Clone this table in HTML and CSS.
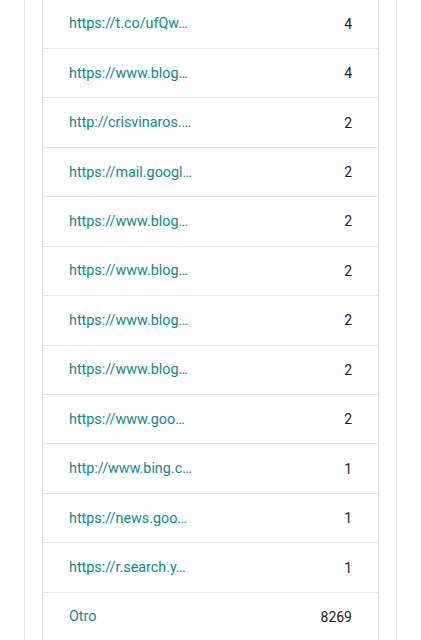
FILE: index.html
```html
<!DOCTYPE html>
<html lang="es">
<head>
  <meta charset="UTF-8">
  <title>Sitios de referencia</title>
  <link rel="stylesheet" href="styles.css">
</head>
<body>
  <div class="card">
    <table class="tabla-sitios">
      <tbody>
        <tr><td class="url"><a href="#">https://t.co/ufQw…</a></td><td class="num">4</td></tr>
        <tr><td class="url"><a href="#">https://www.blog…</a></td><td class="num">4</td></tr>
        <tr><td class="url"><a href="#">http://crisvinaros.…</a></td><td class="num">2</td></tr>
        <tr><td class="url"><a href="#">https://mail.googl…</a></td><td class="num">2</td></tr>
        <tr><td class="url"><a href="#">https://www.blog…</a></td><td class="num">2</td></tr>
        <tr><td class="url"><a href="#">https://www.blog…</a></td><td class="num">2</td></tr>
        <tr><td class="url"><a href="#">https://www.blog…</a></td><td class="num">2</td></tr>
        <tr><td class="url"><a href="#">https://www.blog…</a></td><td class="num">2</td></tr>
        <tr><td class="url"><a href="#">https://www.goo…</a></td><td class="num">2</td></tr>
        <tr><td class="url"><a href="#">http://www.bing.c…</a></td><td class="num">1</td></tr>
        <tr><td class="url"><a href="#">https://news.goo…</a></td><td class="num">1</td></tr>
        <tr><td class="url"><a href="#">https://r.search.y…</a></td><td class="num">1</td></tr>
        <tr><td class="url otro">Otro</td><td class="num">8269</td></tr>
      </tbody>
    </table>
  </div>
</body>
</html>
```

FILE: styles.css
```css
body {
  margin: 0;
  background: #fff;
  font-family: Roboto, "Noto Sans", Arial, sans-serif;
  font-size: 14px;
}

.card {
  margin: 0 24px;
  padding: 0 17px;
  border-left: 1px solid #e4e4e4;
  border-right: 1px solid #e4e4e4;
  min-height: 640px;
}

.tabla-sitios {
  width: 100%;
  margin-top: -1.5px;
  border-collapse: collapse;
  border-left: 1px solid #e4e4e4;
  border-right: 1px solid #e4e4e4;
}

.tabla-sitios td {
  height: 48.45px;
  padding: 0;
  border-top: 1px solid #e4e4e4;
  vertical-align: middle;
}

.url {
  padding-left: 26px !important;
  font-size: 14.35px;
  color: #0b8a8f;
}

.url a {
  color: #0b8a8f;
  text-decoration: none;
}

.num {
  text-align: right;
  padding-right: 26px !important;
  color: #222;
}
```
